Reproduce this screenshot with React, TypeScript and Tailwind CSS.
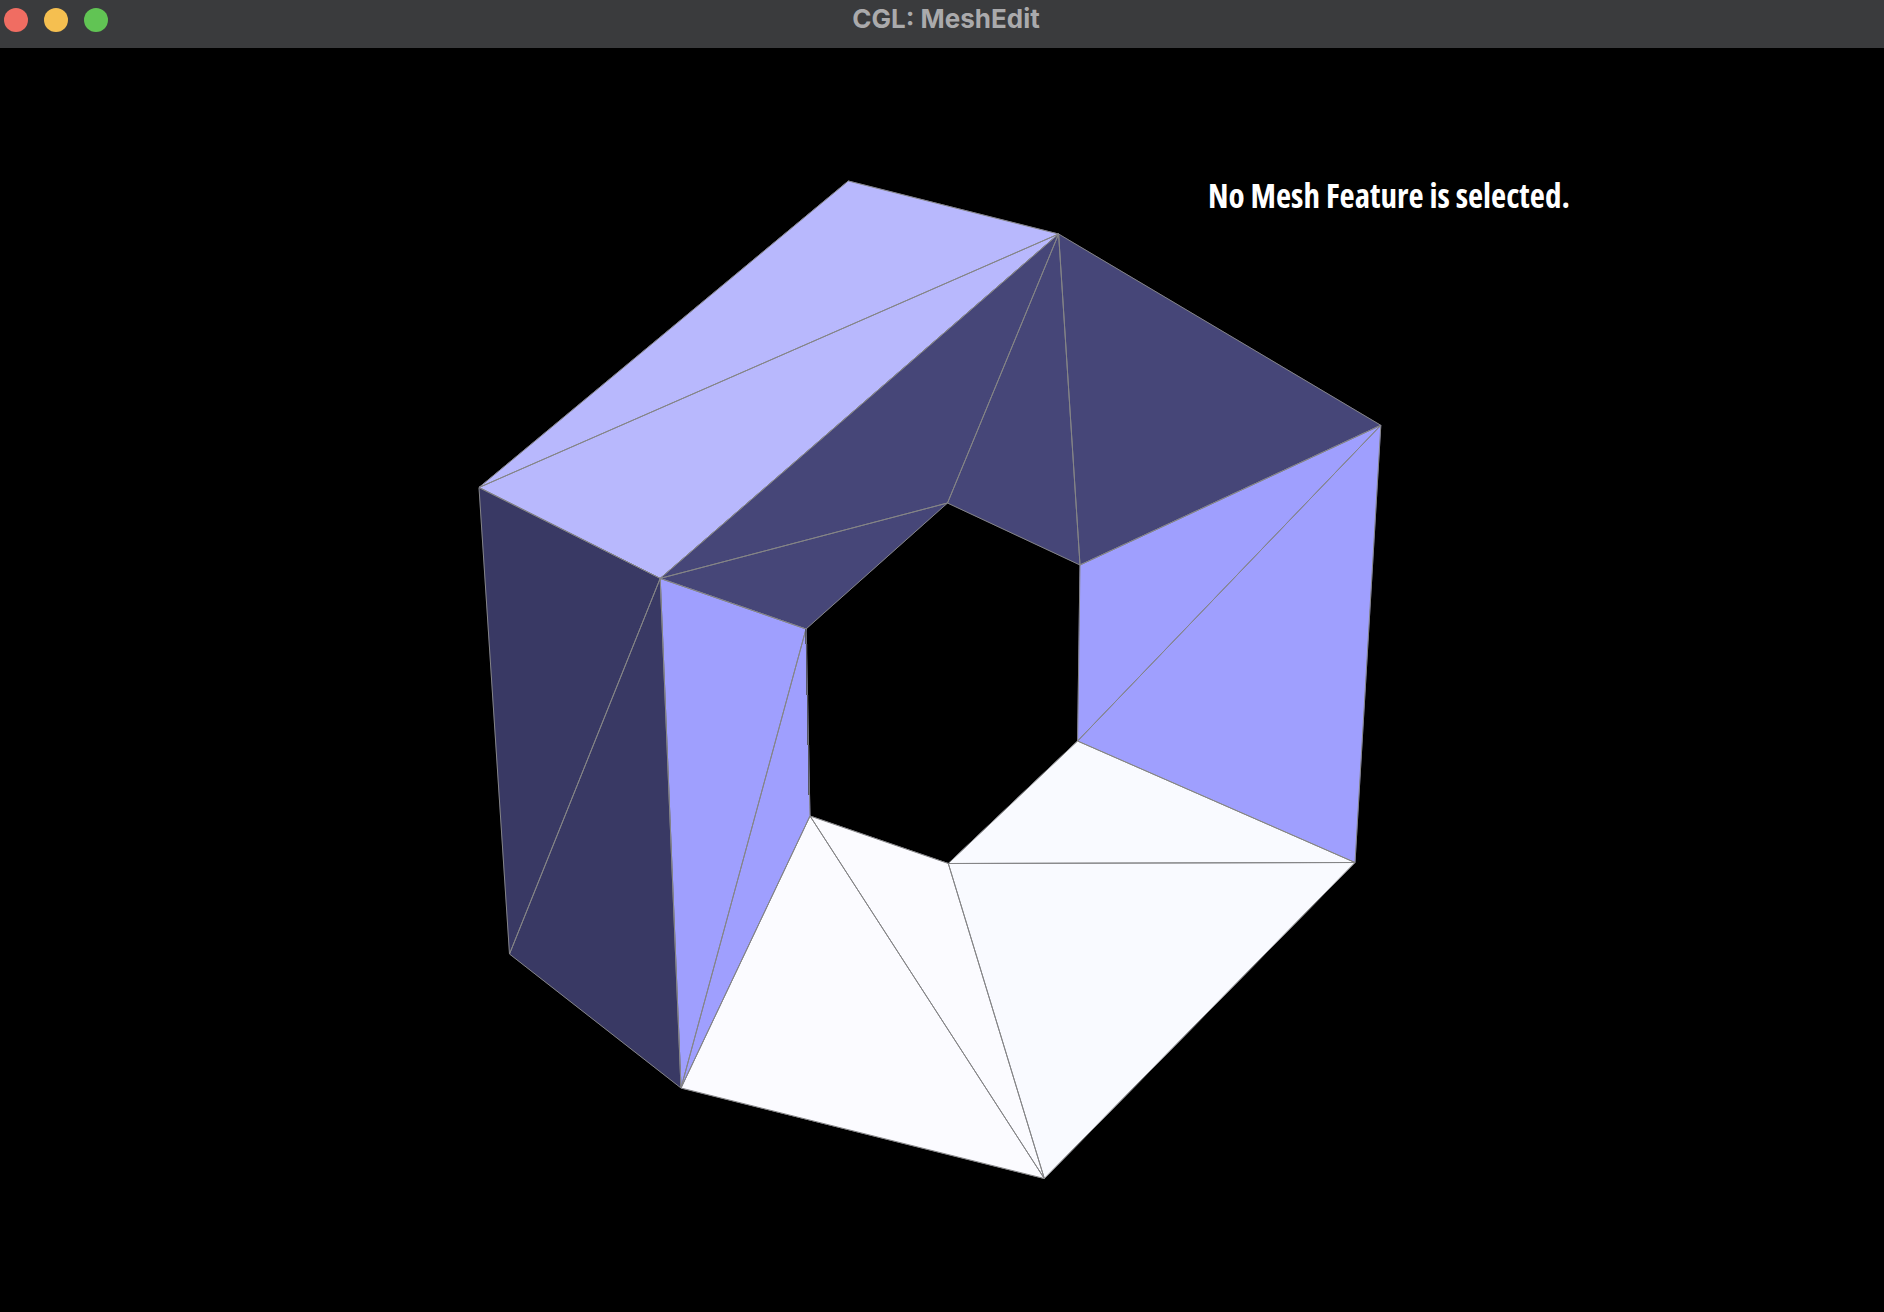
const P: Record<string, [number, number]> = {
  A: [848.3, 181],
  B: [1058.6, 234],
  C: [479, 487.5],
  D: [660.2, 578.4],
  E: [947.5, 503],
  F: [806, 629],
  G: [1080, 565],
  H: [1380.8, 425.3],
  I: [1077.6, 741],
  J: [1355, 862.5],
  K: [948.3, 863.5],
  L: [810, 816],
  M: [681, 1088],
  N: [1044.3, 1178.5],
  O: [509.5, 954],
};

const light = "#b8b8fd";
const top = "#464678";
const left = "#393964";
const peri = "#9f9ffe";
const white = "#f9faff";
const white2 = "#fbfbff";

const faces: [string, string][] = [
  ["ABC", light],
  ["CBD", light],
  ["DBE", top],
  ["DEF", top],
  ["BEG", top],
  ["BGH", top],
  ["GHI", peri],
  ["IHJ", peri],
  ["IKJ", white],
  ["KNJ", white],
  ["LKN", white2],
  ["LNM", white2],
  ["DFM", peri],
  ["FLM", peri],
  ["CDO", left],
  ["ODM", left],
];

const pts = (s: string) => s.split("").map((c) => P[c].join(",")).join(" ");

export default function App() {
  return (
    <div className="flex h-[1312px] w-[1884px] flex-col overflow-hidden bg-black">
      <header className="relative flex h-12 shrink-0 items-center justify-center bg-[#3a3b3d]">
        <div className="absolute left-1 top-2 flex gap-4">
          <span className="h-6 w-6 rounded-full bg-[#f06d62]" />
          <span className="h-6 w-6 rounded-full bg-[#f5bf50]" />
          <span className="h-6 w-6 rounded-full bg-[#61c454]" />
        </div>
        <h1 className="font-['Inter',sans-serif] text-[26px] font-bold leading-none text-[#aaaaac] -translate-y-[5px] translate-x-[4px]">
          CGL: MeshEdit
        </h1>
      </header>
      <main className="relative flex-1">
        <svg viewBox="0 48 1884 1264" className="block h-full w-full">
          {faces.map(([f, c]) => (
            <polygon key={f} points={pts(f)} fill={c} stroke={c} strokeWidth={0.5} />
          ))}
          {faces.map(([f]) => (
            <polygon key={f} points={pts(f)} fill="none" stroke="#858587" strokeWidth={1} />
          ))}
          <path d="M805.7 629 L805.7 644 M806.7 644 L806.7 695 M807.7 695 L807.7 745 M808.7 745 L808.7 795" stroke="#50505a" strokeWidth={1.2} fill="none" />
        </svg>
        <p className="absolute left-[1208px] top-[128px] whitespace-nowrap font-['Open_Sans',sans-serif] text-[33px] font-bold leading-10 text-white [font-stretch:75%]">
          No Mesh Feature is selected.
        </p>
      </main>
    </div>
  );
}
